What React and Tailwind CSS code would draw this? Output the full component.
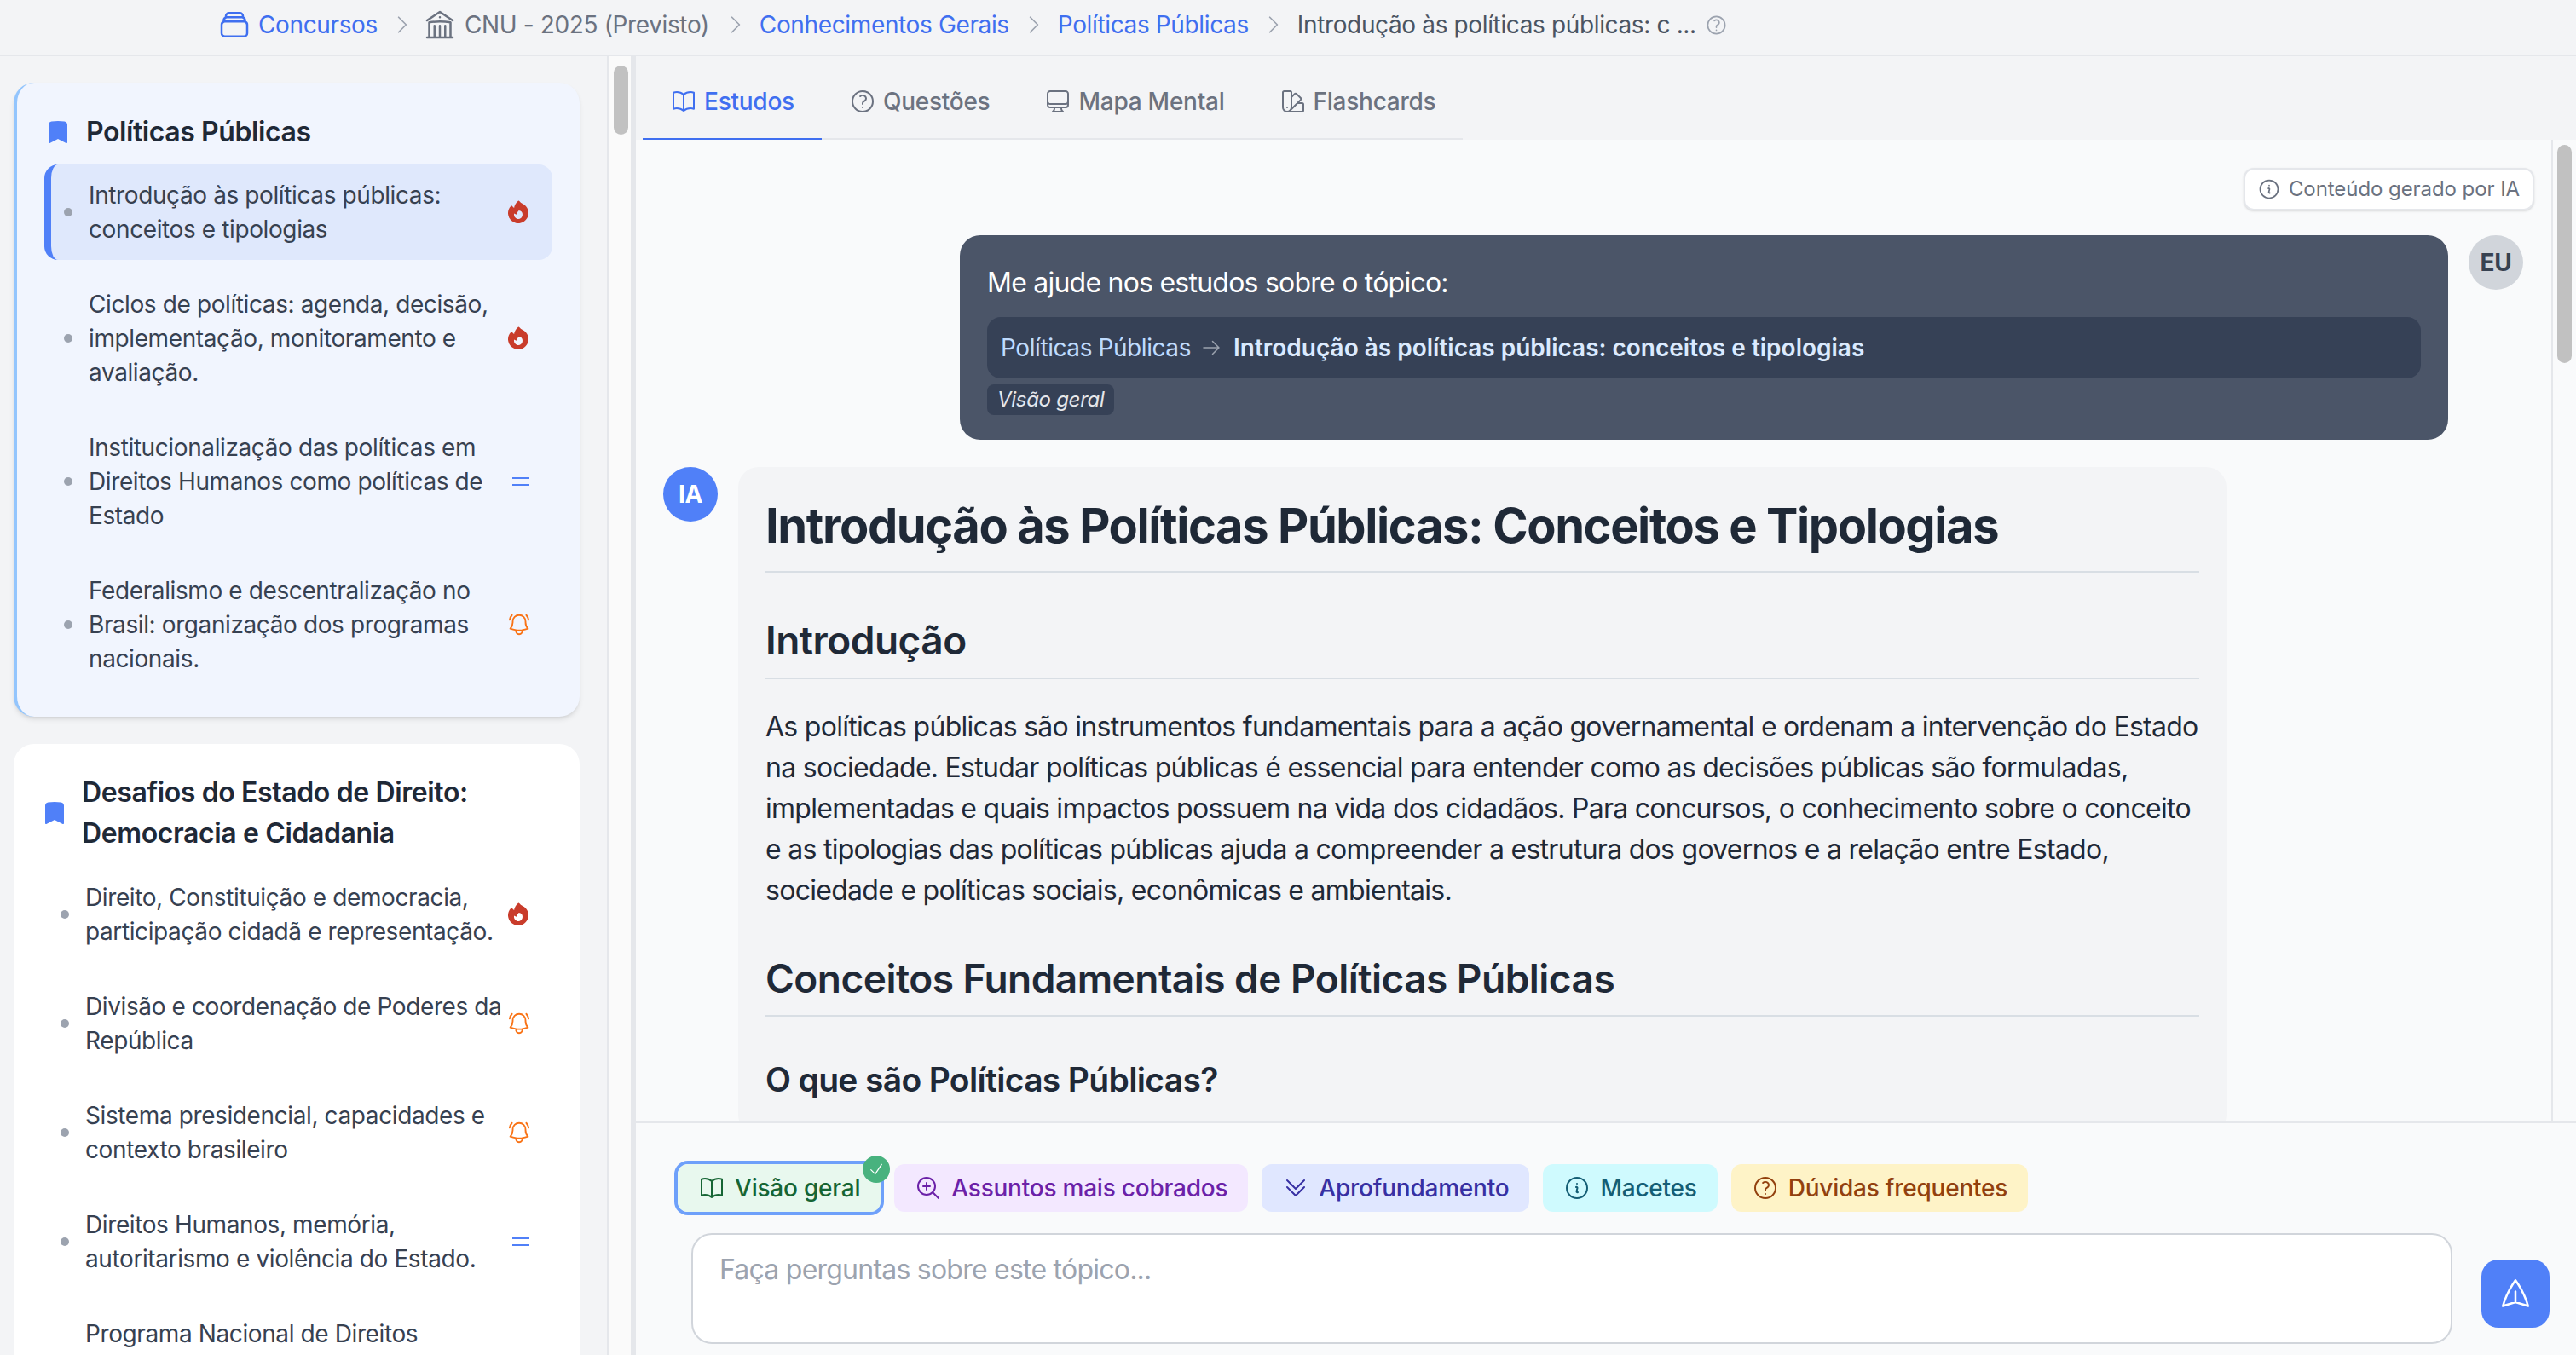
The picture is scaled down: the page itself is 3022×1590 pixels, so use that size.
import React from "react";
import {
  HiOutlineRectangleStack, HiOutlineBuildingLibrary, HiOutlineChevronRight, HiOutlineQuestionMarkCircle,
  HiOutlineBookOpen, HiOutlineComputerDesktop, HiOutlineSwatch, HiBookmark, HiFire, HiOutlineBellAlert,
  HiOutlineInformationCircle, HiOutlineMagnifyingGlassPlus, HiOutlineChevronDoubleDown, HiOutlinePaperAirplane,
  HiOutlineArrowRight, HiOutlineCheck,
} from "react-icons/hi2";

function EqualsIcon() {
  return (
    <svg viewBox="0 0 20 10" className="w-[20px] h-[10px] mr-[3px] text-[#5080f8]" fill="none" stroke="currentColor" strokeWidth="2">
      <path d="M0 1h20M0 9h20" />
    </svg>
  );
}

function Priority({ kind }) {
  return (
    <div className="w-[32px] h-[32px] shrink-0 flex items-center justify-end">
      {kind === "fire" && <HiFire className="w-[32px] h-[32px] text-[#c93c2b]" />}
      {kind === "bell" && <HiOutlineBellAlert className="w-[30px] h-[30px] text-[#f97316]" />}
      {kind === "eq" && <EqualsIcon />}
    </div>
  );
}

function Item({ text, kind, active, tall }) {
  return (
    <div className={`flex items-center rounded-[16px] border-l-[8px] pl-[15px] pr-[24px] py-[16px] ${active ? "border-[#5080f8] bg-[#dfe8fc]" : "border-transparent"}`}>
      <span className="w-[10px] h-[10px] rounded-full bg-[#9ca3af] shrink-0 mr-[19px]" />
      <span className={`flex-1 text-[28px] leading-[40px] tracking-[-0.014em] text-[#374151] ${tall ? "min-h-[120px]" : ""}`}>{text}</span>
      <Priority kind={kind} />
    </div>
  );
}

function Crumb({ children, tone }) {
  return <span className={`text-[28px] leading-[40px] tracking-[-0.013em] whitespace-nowrap ${tone}`}>{children}</span>;
}

function Sep() {
  return <HiOutlineChevronRight className="w-[28px] h-[28px] ml-[15px] mr-[14px] text-[#9ca3af] shrink-0" />;
}

function Tab({ icon: Icon, label, active }) {
  return (
    <div className={`flex items-center gap-[8px] px-[32px] pt-[10px] border-b-[2px] -mb-[2px] ${active ? "border-[#3f6ff0] text-[#3f6ff0]" : "border-transparent text-[#6b7280]"}`}>
      <Icon className="w-[32px] h-[32px]" />
      <span className="text-[28px] leading-[40px] font-medium tracking-[-0.009em]">{label}</span>
    </div>
  );
}

function Chip({ icon: Icon, label, bg, fg }) {
  return (
    <div className={`flex items-center gap-[11px] h-[56px] px-[24px] rounded-[12px] ${bg} ${fg}`}>
      <Icon className="w-[32px] h-[32px] shrink-0" />
      <span className="text-[28px] leading-[40px] font-medium tracking-[-0.008em] whitespace-nowrap">{label}</span>
    </div>
  );
}

export default function App() {
  return (
    <div className="w-[3022px] h-screen overflow-hidden flex flex-col bg-[#f3f4f6] font-[Inter,sans-serif] text-[#1f2937] antialiased">
      {/* breadcrumb */}
      <header className="h-[66px] shrink-0 border-b-[2px] border-[#e5e7eb] flex items-center pl-[255px] pb-[6px]">
        <HiOutlineRectangleStack className="w-[40px] h-[40px] text-[#3f6ff0] mr-[8px]" />
        <Crumb tone="text-[#3f6ff0]">Concursos</Crumb>
        <Sep />
        <HiOutlineBuildingLibrary className="w-[40px] h-[40px] -ml-[4px] text-[#6b7280] mr-[9px]" />
        <Crumb tone="mr-[2px] text-[#6b7280]">CNU - 2025 (Previsto)</Crumb>
        <Sep />
        <Crumb tone="text-[#3f6ff0]">Conhecimentos Gerais</Crumb>
        <Sep />
        <Crumb tone="text-[#3f6ff0]">Políticas Públicas</Crumb>
        <Sep />
        <Crumb tone="text-[#4b5563]">Introdução às políticas públicas: c ...</Crumb>
        <HiOutlineQuestionMarkCircle className="w-[27px] h-[27px] ml-[10px] text-[#9ca3af]" />
      </header>

      <div className="flex-1 min-h-0 flex">
        {/* sidebar */}
        <aside className="w-[746px] shrink-0 flex">
          <div className="w-[714px] shrink-0 overflow-hidden border-r-[2px] border-[#e5e7eb] pt-[31px] pl-[16px] pr-[32px]">
            <section className="rounded-[24px] border-l-[4px] border-[#93c5fd] bg-[#f1f5fe] shadow-md pt-[34px] px-[32px] pb-[32px]">
              <div className="flex items-center mb-[14px]">
                <HiBookmark className="w-[32px] h-[32px] text-[#5080f8] shrink-0 mr-[17px]" />
                <h2 className="text-[32px] leading-[48px] font-semibold tracking-[-0.013em]">Políticas Públicas</h2>
              </div>
              <div className="flex flex-col gap-[16px]">
                <Item active kind="fire" text="Introdução às políticas públicas: conceitos e tipologias" />
                <Item kind="fire" text="Ciclos de políticas: agenda, decisão, implementação, monitoramento e avaliação." />
                <Item kind="eq" text="Institucionalização das políticas em Direitos Humanos como políticas de Estado" />
                <Item kind="bell" text="Federalismo e descentralização no Brasil: organização dos programas nacionais." />
              </div>
            </section>
            <section className="mt-[32px] rounded-[24px] bg-white pt-[33px] px-[32px] pb-[32px]">
              <div className="flex items-center mb-[15px]">
                <HiBookmark className="w-[32px] h-[32px] text-[#5080f8] shrink-0 mr-[16px]" />
                <h2 className="text-[32px] leading-[48px] font-semibold tracking-[-0.012em]">Desafios do Estado de Direito: Democracia e Cidadania</h2>
              </div>
              <div className="flex flex-col gap-[16px]">
                <Item kind="fire" text="Direito, Constituição e democracia, participação cidadã e representação." />
                <Item kind="bell" text="Divisão e coordenação de Poderes da República" />
                <Item kind="bell" text="Sistema presidencial, capacidades e contexto brasileiro" />
                <Item kind="eq" text="Direitos Humanos, memória, autoritarismo e violência do Estado." />
                <Item tall kind="eq" text="Programa Nacional de Direitos" />
              </div>
            </section>
          </div>
          <div className="w-[26px] shrink-0 bg-[#fafafa] pt-[11px] pl-[6px]">
            <div className="w-[17px] h-[81px] rounded-full bg-[#c1c1c1]" />
          </div>
          <div className="w-[6px] shrink-0 bg-[#e5e7eb]" />
        </aside>

        {/* main */}
        <main className="flex-1 min-w-0 flex flex-col">
          <nav className="h-[98px] shrink-0 pl-[8px] flex">
            <div className="flex border-b-[2px] border-[#e5e7eb]">
              <Tab active icon={HiOutlineBookOpen} label="Estudos" />
              <Tab icon={HiOutlineQuestionMarkCircle} label="Questões" />
              <Tab icon={HiOutlineComputerDesktop} label="Mapa Mental" />
              <Tab icon={HiOutlineSwatch} label="Flashcards" />
            </div>
          </nav>

          <div className="h-[1152px] shrink-0 flex bg-[#f9fafb]">
            <div className="w-[2247px] shrink-0 overflow-hidden pt-[33px]">
              <div className="flex justify-end pr-[20px]">
                <div className="h-[50px] flex items-center gap-[9px] pl-[14px] pr-[15px] bg-white rounded-[12px] border-[2px] border-[#e5e7eb] shadow-sm text-[#6b7280]">
                  <HiOutlineInformationCircle className="w-[28px] h-[28px]" />
                  <span className="text-[24px] leading-[32px] tracking-[-0.003em]">Conteúdo gerado por IA</span>
                </div>
              </div>

              <div className="mt-[29px] flex justify-end gap-[24px] pr-[33px]">
                <div className="w-[1746px] h-[240px] rounded-[24px] bg-[#4b5568] pt-[32px] px-[32px]">
                  <p className="text-[32px] leading-[48px] tracking-[-0.024em] text-white">Me ajude nos estudos sobre o tópico:</p>
                  <div className="mt-[16px] h-[72px] rounded-[16px] bg-[#364156] px-[16px] flex items-center text-[28px] leading-[40px]">
                    <span className="text-[#bfdbfe] tracking-[-0.015em]">Políticas Públicas</span>
                    <HiOutlineArrowRight className="w-[24px] h-[24px] ml-[12px] mr-[14px] text-[#9ca3af]" />
                    <span className="font-semibold text-[#dbeafe] tracking-[0em]">Introdução às políticas públicas: conceitos e tipologias</span>
                  </div>
                  <div className="mt-[7px] w-fit h-[36px] rounded-[8px] bg-[#364156] px-[12px] flex items-center text-[24px] italic tracking-[-0.012em] text-[#e5e7eb]">Visão geral</div>
                </div>
                <div className="w-[64px] h-[64px] rounded-full bg-[#d1d5db] flex items-center justify-center text-[28px] font-bold tracking-[-0.01em] text-[#374151]">EU</div>
              </div>

              <div className="mt-[32px] flex gap-[24px] pl-[32px]">
                <div className="w-[64px] h-[64px] rounded-full bg-[#5080f8] flex items-center justify-center text-[28px] font-bold tracking-[-0.01em] text-white shrink-0">IA</div>
                <article className="w-[1746px] rounded-[24px] bg-[#f3f4f6] pt-[32px] px-[32px] pb-[40px]">
                  <h1 className="text-[56px] leading-[75px] font-bold tracking-[-0.025em] pb-[15px] border-b-[2px] border-[#d8dee4]">Introdução às Políticas Públicas: Conceitos e Tipologias</h1>
                  <h2 className="mt-[49px] text-[46px] leading-[60px] font-semibold tracking-[-0.0115em] pb-[14px] border-b-[2px] border-[#d8dee4]">Introdução</h2>
                  <p className="mt-[32px] -mr-[6px] text-[32px] leading-[48px] tracking-[-0.0225em]">As políticas públicas são instrumentos fundamentais para a ação governamental e ordenam a intervenção do Estado na sociedade. Estudar políticas públicas é essencial para entender como as decisões públicas são formuladas, implementadas e quais impactos possuem na vida dos cidadãos. Para concursos, o conhecimento sobre o conceito e as tipologias das políticas públicas ajuda a compreender a estrutura dos governos e a relação entre Estado, sociedade e políticas sociais, econômicas e ambientais.</p>
                  <h2 className="mt-[49px] text-[46px] leading-[60px] font-semibold tracking-[-0.0115em] pb-[13px] border-b-[2px] border-[#d8dee4]">Conceitos Fundamentais de Políticas Públicas</h2>
                  <h3 className="mt-[49px] text-[39px] leading-[50px] font-semibold tracking-[-0.017em]">O que são Políticas Públicas?</h3>
                </article>
              </div>
            </div>
            <div className="flex-1 border-l-[2px] border-[#e5e7eb] pt-[6px] pl-[5px]">
              <div className="w-[17px] h-[256px] rounded-full bg-[#c1c1c1]" />
            </div>
          </div>

          <div className="flex-1 min-h-0 border-t-[2px] border-[#e5e7eb] bg-[#f9fafb]">
            <div className="mt-[48px] pl-[49px] flex gap-[16px]">
              <div className="relative ring-[4px] ring-[#6ea0fa] rounded-[12px]">
                <Chip icon={HiOutlineBookOpen} label="Visão geral" bg="bg-[#e8f8ee]" fg="text-[#166534]" />
                <span className="absolute -top-[10px] -right-[11px] w-[32px] h-[32px] rounded-full bg-[#48b27e] flex items-center justify-center text-white">
                  <HiOutlineCheck className="w-[20px] h-[20px]" />
                </span>
              </div>
              <Chip icon={HiOutlineMagnifyingGlassPlus} label="Assuntos mais cobrados" bg="bg-[#f3e8ff]" fg="text-[#6b21a8]" />
              <Chip icon={HiOutlineChevronDoubleDown} label="Aprofundamento" bg="bg-[#e0e7ff]" fg="text-[#3730a3]" />
              <Chip icon={HiOutlineInformationCircle} label="Macetes" bg="bg-[#cffafe]" fg="text-[#155e75]" />
              <Chip icon={HiOutlineQuestionMarkCircle} label="Dúvidas frequentes" bg="bg-[#fef3c7]" fg="text-[#92400e]" />
            </div>
            <div className="mt-[25px] pl-[65px] flex items-end gap-[34px]">
              <div className="w-[2066px] h-[130px] rounded-[24px] border-[2px] border-[#d1d5db] bg-white px-[31px] pt-[17px] text-[32px] leading-[48px] tracking-[-0.024em] text-[#9ca3af]">Faça perguntas sobre este tópico...</div>
              <div className="w-[80px] h-[80px] mb-[19px] rounded-[20px] bg-[#5080f8] flex items-center justify-center text-white">
                <HiOutlinePaperAirplane className="w-[40px] h-[40px] -rotate-90" />
              </div>
            </div>
          </div>
        </main>
      </div>
    </div>
  );
}
